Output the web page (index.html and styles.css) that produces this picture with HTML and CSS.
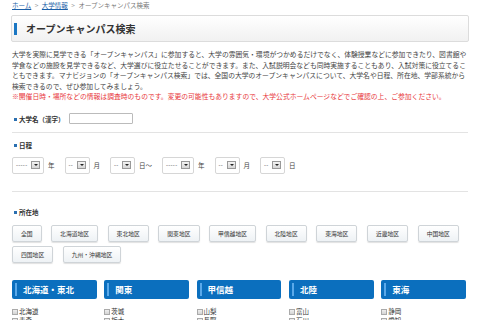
FILE: index.html
```html
<!DOCTYPE html>
<html lang="ja">
<head>
  <meta charset="UTF-8">
  <title>オープンキャンパス検索</title>
  <link rel="stylesheet" href="styles.css">
</head>
<body>
  <div class="page">
    <div class="breadcrumb">
      <a href="#">ホーム</a> <span class="sep">&gt;</span> <a href="#">大学情報</a> <span class="sep">&gt;</span> オープンキャンパス検索
    </div>

    <div class="title-box">
      <h1>オープンキャンパス検索</h1>
    </div>

    <p class="intro">
      大学を実際に見学できる「オープンキャンパス」に参加すると、大学の雰囲気・環境がつかめるだけでなく、体験授業などに参加できたり、図書館や学食などの施設を見学できるなど、大学選びに役立たせることができます。また、入試説明会なども同時実施することもあり、入試対策に役立てることもできます。マナビジョンの「オープンキャンパス検索」では、全国の大学のオープンキャンパスについて、大学名や日程、所在地、学部系統から検索できるので、ぜひ参加してみましょう。<br>
      <span class="notice">※開催日時・場所などの情報は調査時のものです。変更の可能性もありますので、大学公式ホームページなどでご確認の上、ご参加ください。</span>
    </p>

    <div class="name-row">
      <span class="label">大学名（漢字）</span>
      <input type="text" class="name-input">
    </div>

    <div class="rule"></div>

    <div class="label label-block">日程</div>
    <div class="date-row">
      <div class="select wide"><span class="dash">-----</span><span class="arrow"></span></div><span class="unit">年</span>
      <div class="select"><span class="dash">--</span><span class="arrow"></span></div><span class="unit">月</span>
      <div class="select"><span class="dash">--</span><span class="arrow"></span></div><span class="unit">日～</span>
      <div class="select wide"><span class="dash">-----</span><span class="arrow"></span></div><span class="unit">年</span>
      <div class="select"><span class="dash">--</span><span class="arrow"></span></div><span class="unit">月</span>
      <div class="select"><span class="dash">--</span><span class="arrow"></span></div><span class="unit">日</span>
    </div>

    <div class="rule rule-2"></div>

    <div class="label label-block label-area">所在地</div>
    <div class="area-buttons">
      <button class="area-btn">全国</button>
      <button class="area-btn">北海道地区</button>
      <button class="area-btn">東北地区</button>
      <button class="area-btn">関東地区</button>
      <button class="area-btn">甲信越地区</button>
      <button class="area-btn">北陸地区</button>
      <button class="area-btn">東海地区</button>
      <button class="area-btn">近畿地区</button>
      <button class="area-btn">中国地区</button>
      <button class="area-btn">四国地区</button>
      <button class="area-btn">九州・沖縄地区</button>
    </div>

    <div class="regions">
      <div class="region">
        <h2>北海道・東北</h2>
        <ul>
          <li><span class="check"></span>北海道</li>
          <li><span class="check"></span>青森</li>
          <li><span class="check"></span>岩手</li>
        </ul>
      </div>
      <div class="region">
        <h2>関東</h2>
        <ul>
          <li><span class="check"></span>茨城</li>
          <li><span class="check"></span>栃木</li>
          <li><span class="check"></span>群馬</li>
        </ul>
      </div>
      <div class="region">
        <h2>甲信越</h2>
        <ul>
          <li><span class="check"></span>山梨</li>
          <li><span class="check"></span>長野</li>
          <li><span class="check"></span>新潟</li>
        </ul>
      </div>
      <div class="region">
        <h2>北陸</h2>
        <ul>
          <li><span class="check"></span>富山</li>
          <li><span class="check"></span>石川</li>
          <li><span class="check"></span>福井</li>
        </ul>
      </div>
      <div class="region">
        <h2>東海</h2>
        <ul>
          <li><span class="check"></span>静岡</li>
          <li><span class="check"></span>愛知</li>
          <li><span class="check"></span>岐阜</li>
        </ul>
      </div>
    </div>
  </div>
</body>
</html>
```
FILE: styles.css
```css
body {
  margin: 0;
  padding: 0;
  background: #fff;
  color: #333;
  font-family: "Noto Sans CJK JP", "DejaVu Sans", sans-serif;
  overflow: hidden;
}

.page {
  margin: 0 12px;
}

/* breadcrumb */
.breadcrumb {
  padding-top: 1px;
  font-size: 6.5px;
  line-height: 8px;
  color: #777;
}

.breadcrumb a {
  color: #1b5fa8;
  text-decoration: underline;
}

.breadcrumb .sep {
  color: #999;
  margin: 0 2px;
}

/* page title */
.title-box {
  margin: 6px -1px 0;
  height: 25px;
  border: 1px solid #dcdcdc;
  border-radius: 2px;
  background: linear-gradient(#fff, #f1f1f1);
  display: flex;
  align-items: center;
}

.title-box h1 {
  margin: 0;
  padding-left: 9px;
  border-left: 3px solid #1b77c3;
  margin-left: 2px;
  font-size: 10px;
  line-height: 12px;
  font-weight: bold;
  color: #333;
}

.intro {
  margin: 7px 0 0;
  font-size: 6.8px;
  line-height: 10.5px;
  color: #444;
}

.notice {
  color: #e8383d;
}

/* labels */
.label {
  font-size: 6.5px;
  font-weight: bold;
  color: #333;
}

.label::before {
  content: "";
  display: inline-block;
  width: 3px;
  height: 3px;
  background: #2a6fb0;
  margin: 0 2px 1px 2px;
  vertical-align: middle;
}

.name-row {
  margin-top: 11px;
  height: 12px;
  display: flex;
  align-items: center;
}

.name-input {
  margin: 0 0 0 4px;
  width: 64px;
  height: 11px;
  padding: 0;
  border: 1px solid #bbb;
  border-radius: 1px;
  box-sizing: border-box;
}

.rule {
  margin-top: 7px;
  border-top: 1px solid #e3e3e3;
}

.rule-2 {
  margin-top: 17px;
}

.label-block {
  margin-top: 7px;
  line-height: 10px;
}

.label-area {
  margin-top: 15px;
}

/* date selects */
.date-row {
  margin-top: 7px;
  display: flex;
  align-items: center;
  height: 17px;
}

.select {
  width: 25px;
  height: 17px;
  box-sizing: border-box;
  border: 1px solid #d6d6d6;
  border-radius: 2px;
  background: #fff;
  display: flex;
  align-items: center;
  padding-left: 3px;
  font-family: "DejaVu Sans", sans-serif;
  font-size: 5.5px;
  color: #555;
}

.select.wide {
  width: 32px;
}

.select .dash {
  flex: 1;
  letter-spacing: 0.3px;
}

.select .arrow {
  width: 9px;
  height: 8px;
  margin-right: 3px;
  box-sizing: border-box;
  border: 1px solid #999;
  background: linear-gradient(#f4f4f4, #d6d6d6);
  position: relative;
}

.select .arrow::after {
  content: "";
  position: absolute;
  left: 2px;
  top: 2px;
  border-left: 2px solid transparent;
  border-right: 2px solid transparent;
  border-top: 2px solid #222;
}

.unit {
  margin: 0 10px 0 4px;
  font-size: 6.5px;
  color: #444;
}

/* area buttons */
.area-buttons {
  margin-top: 8px;
  display: flex;
  flex-wrap: wrap;
  gap: 4px 9.5px;
}

.area-btn {
  height: 17px;
  padding: 0 8px;
  border: 1px solid #cfd4d8;
  border-radius: 2px;
  background: linear-gradient(#fff, #eef2f5);
  box-shadow: 0 1px 1px rgba(0, 0, 0, 0.12);
  font-family: inherit;
  font-size: 5.8px;
  color: #333;
}

/* region panels */
.regions {
  margin-top: 17px;
  display: grid;
  grid-template-columns: repeat(5, 1fr);
  gap: 7.5px;
  margin-right: 2px;
}

.region h2 {
  margin: 0;
  height: 19px;
  background: #0b6fbe;
  border-radius: 2px;
  display: flex;
  align-items: center;
  font-size: 8.5px;
  font-weight: bold;
  color: #fff;
}

.region h2::before {
  content: "";
  width: 2px;
  height: 13px;
  background: #5aa9ea;
  margin: 0 6px 0 3px;
}

.region ul {
  list-style: none;
  margin: 8.5px 0 0;
  padding: 0;
}

.region li {
  font-size: 6.5px;
  line-height: 9px;
  color: #333;
  display: flex;
  align-items: center;
}

.check {
  width: 6px;
  height: 6px;
  box-sizing: border-box;
  border: 1px solid #aaa;
  background: linear-gradient(#eee, #d4d4d4);
  margin-right: 1px;
}
```
